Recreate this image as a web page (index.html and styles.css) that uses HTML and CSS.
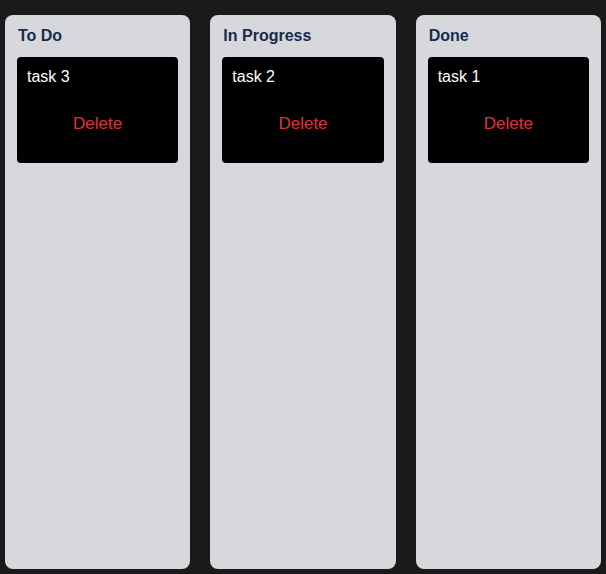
FILE: index.html
```html
<!DOCTYPE html>
<html lang="en">
<head>
  <meta charset="UTF-8" />
  <meta name="viewport" content="width=device-width, initial-scale=1" />
  <title>Kanban Board</title>
  <link rel="stylesheet" href="styles.css">
</head>
<body>
  <div class="board">
    <div class="column">
      <h3>To Do</h3>
      <div class="task">
        <p>task 3</p>
        <button type="button" class="delete-btn">Delete</button>
      </div>
    </div>

    <div class="column">
      <h3>In Progress</h3>
      <div class="task">
        <p>task 2</p>
        <button type="button" class="delete-btn">Delete</button>
      </div>
    </div>

    <div class="column">
      <h3>Done</h3>
      <div class="task">
        <p>task 1</p>
        <button type="button" class="delete-btn">Delete</button>
      </div>
    </div>
  </div>
</body>
</html>
```

FILE: styles.css
```css
* {
  box-sizing: border-box;
}

html, body {
  margin: 0;
  padding: 0;
  font-family: "Liberation Sans", Arial, sans-serif;
  background-color: #1a1a1a;
}

.board {
  display: flex;
  gap: 20px;
  padding: 15px 5px 5px;
  height: 100vh;
}

.column {
  flex: 1;
  background-color: #d7d8dc;
  border-radius: 8px;
  padding: 12px;
}

h3 {
  margin: 0 0 12px;
  padding: 0 1px;
  font-size: 16px;
  line-height: 18px;
  color: #172b4d;
}

.task {
  background-color: #000;
  border-radius: 4px;
  padding: 11px 10px 10px;
}

.task p {
  margin: 0;
  color: #fff;
  font-size: 16px;
  line-height: 18px;
}

.delete-btn {
  display: block;
  width: 100%;
  margin: 20px 0 11px;
  padding: 8px;
  background: none;
  border: none;
  color: #e0303f;
  font-family: inherit;
  font-size: 17px;
  line-height: 20px;
  cursor: pointer;
}
```
